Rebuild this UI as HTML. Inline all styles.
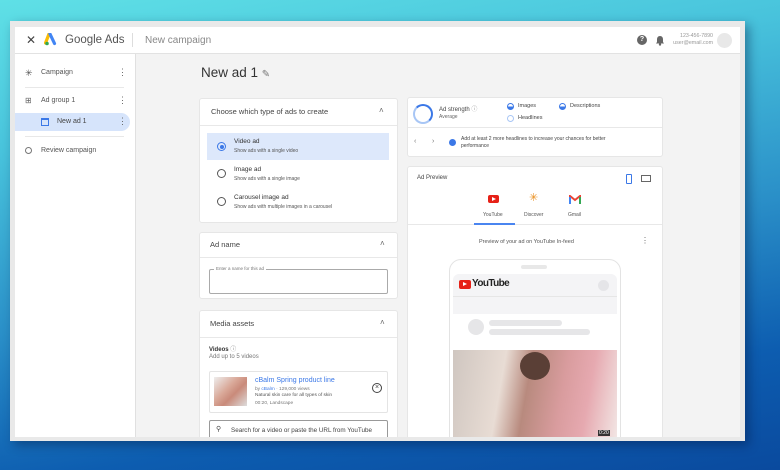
<!DOCTYPE html>
<html><head><meta charset="utf-8"><style>
*{margin:0;padding:0;box-sizing:border-box}
body{width:780px;height:470px;overflow:hidden;position:relative;font-family:"Liberation Sans",Arial,sans-serif;color:#3c4043;
background:linear-gradient(170deg,#5fe0e6 0%,#48c3dc 25%,#2a8fc8 55%,#0d5db0 80%,#0a4a9e 100%)}
.a{position:absolute}
.frame{left:10px;top:21px;width:735px;height:420px;background:#e9e9e9;box-shadow:4px 4px 10px rgba(0,20,60,.4)}
.hdr{left:15px;top:27px;width:725px;height:27px;background:#fff;border-bottom:1px solid #e2e2e2}
.main{left:15px;top:54px;width:725px;height:383px;background:#f3f3f3}
.side{left:15px;top:54px;width:121px;height:383px;background:#fff;border-right:1px solid #e0e0e0}
.t{position:absolute;white-space:nowrap}
.card{position:absolute;background:#fff;border:1px solid #e6e6e6;border-radius:3px}
.sep{position:absolute;height:1px;background:#e8e8e8}
.radio{position:absolute;width:9px;height:9px;border:1.3px solid #555;border-radius:50%}
.clip{position:absolute;left:0;top:0;width:780px;height:437px;overflow:hidden}
</style></head><body>
<div class="a frame"></div>
<div class="a main"></div>
<div class="a hdr"></div>
<div class="a side"></div>
<!-- header -->
<div class="t" style="left:26px;top:33px;font-size:12px;color:#444">✕</div>
<svg class="a" style="left:44px;top:33px" width="15" height="13" viewBox="0 0 15 13"><path d="M5 1 L1.5 10" stroke="#fbbc04" stroke-width="3.2" stroke-linecap="round"/><path d="M6 1 L10.5 10.5" stroke="#4285f4" stroke-width="3.2" stroke-linecap="round"/><circle cx="3" cy="10.5" r="1.8" fill="#34a853"/></svg>
<div class="t" style="left:65px;top:34px;font-size:11.5px;color:#555">Google Ads</div>
<div class="a" style="left:132px;top:33px;width:1px;height:14px;background:#ddd"></div>
<div class="t" style="left:145px;top:35px;font-size:10px;color:#888">New campaign</div>
<div class="a" style="left:637px;top:35px;width:10px;height:10px;border-radius:50%;background:#666;color:#fff;font-size:7px;text-align:center;line-height:10px;font-weight:bold">?</div>
<svg class="a" style="left:655px;top:35px" width="10" height="11" viewBox="0 0 10 11"><path d="M5 1C3 1 2 2.5 2 4.5V7L1 8.5H9L8 7V4.5C8 2.5 7 1 5 1Z" fill="#666"/><circle cx="5" cy="9.5" r="1.2" fill="#666"/></svg>
<div class="t" style="left:666px;top:33px;width:47px;font-size:5.3px;color:#999;text-align:right;line-height:7px">123-456-7890<br>user@email.com</div>
<div class="a" style="left:717px;top:33px;width:15px;height:15px;border-radius:50%;background:#e8e8e8"></div>
<!-- sidebar -->
<div class="t" style="left:25px;top:68px;font-size:9px;color:#555">✳</div>
<div class="t" style="left:41px;top:69px;font-size:7px;color:#555">Campaign</div>
<div class="t" style="left:118px;top:67px;font-size:9px;color:#666">⋮</div>
<div class="sep" style="left:25px;top:87px;width:99px"></div>
<div class="t" style="left:25px;top:96px;font-size:8px;color:#666">⊞</div>
<div class="t" style="left:41px;top:97px;font-size:7px;color:#555">Ad group 1</div>
<div class="t" style="left:118px;top:95px;font-size:9px;color:#666">⋮</div>
<div class="a" style="left:15px;top:113px;width:115px;height:18px;background:#d6e4fb;border-radius:0 9px 9px 0"></div>
<div class="a" style="left:41px;top:118px;width:8px;height:8px;border:1.3px solid #3b78e7;border-top-width:2.5px"></div>
<div class="t" style="left:57px;top:118px;font-size:7px;color:#444">New ad 1</div>
<div class="t" style="left:118px;top:116px;font-size:9px;color:#666">⋮</div>
<div class="sep" style="left:25px;top:136px;width:99px"></div>
<div class="a" style="left:25px;top:147px;width:7px;height:7px;border:1px solid #777;border-radius:50%"></div>
<div class="t" style="left:41px;top:147px;font-size:7px;color:#555">Review campaign</div>
<!-- title -->
<div class="t" style="left:201px;top:65px;font-size:13.5px;color:#333">New ad 1 <span style="font-size:10px;color:#777">✎</span></div>
<div class="clip">
<!-- card 1 -->
<div class="card" style="left:199px;top:98px;width:199px;height:125px"></div>
<div class="t" style="left:211px;top:107px;font-size:7.5px;color:#444">Choose which type of ads to create</div>
<div class="t" style="left:379px;top:106px;font-size:8px;color:#666">˄</div>
<div class="sep" style="left:200px;top:125px;width:197px"></div>
<div class="a" style="left:207px;top:133px;width:182px;height:27px;background:#dde8fb"></div>
<div class="radio" style="left:217px;top:142px;border-color:#3b78e7"></div><div class="a" style="left:220px;top:145px;width:4px;height:4px;border-radius:50%;background:#3b78e7"></div>
<div class="t" style="left:234px;top:138px;font-size:6.5px;color:#333">Video ad</div>
<div class="t" style="left:234px;top:148px;font-size:5px;color:#555">Show ads with a single video</div>
<div class="radio" style="left:217px;top:169px"></div>
<div class="t" style="left:234px;top:166px;font-size:6.5px;color:#333">Image ad</div>
<div class="t" style="left:234px;top:176px;font-size:5px;color:#555">Show ads with a single image</div>
<div class="radio" style="left:217px;top:197px"></div>
<div class="t" style="left:234px;top:194px;font-size:6.5px;color:#333">Carousel image ad</div>
<div class="t" style="left:234px;top:204px;font-size:5px;color:#555">Show ads with multiple images in a carousel</div>
<!-- card 2 -->
<div class="card" style="left:199px;top:232px;width:199px;height:67px"></div>
<div class="t" style="left:210px;top:240px;font-size:7.5px;color:#444">Ad name</div>
<div class="t" style="left:380px;top:239px;font-size:8px;color:#666">˄</div>
<div class="sep" style="left:200px;top:257px;width:197px"></div>
<div class="a" style="left:209px;top:269px;width:179px;height:25px;border:1px solid #aaa;border-radius:2px"></div>
<div class="t" style="left:214px;top:266px;font-size:4.5px;color:#777;background:#fff;padding:0 2px">Enter a name for this ad</div>
<!-- card 3 -->
<div class="card" style="left:199px;top:310px;width:199px;height:130px"></div>
<div class="t" style="left:210px;top:319px;font-size:7.5px;color:#444">Media assets</div>
<div class="t" style="left:380px;top:318px;font-size:8px;color:#666">˄</div>
<div class="sep" style="left:200px;top:337px;width:197px"></div>
<div class="t" style="left:209px;top:344px;font-size:6px;color:#333;font-weight:bold">Videos <span style="font-weight:normal;color:#888">ⓘ</span></div>
<div class="t" style="left:209px;top:354px;font-size:6px;color:#777">Add up to 5 videos</div>
<div class="a" style="left:209px;top:371px;width:179px;height:42px;border:1px solid #e4e4e4;border-radius:2px"></div>
<div class="a" style="left:214px;top:377px;width:33px;height:29px;background:linear-gradient(135deg,#eee 0%,#d9a898 40%,#c98a7a 60%,#ddd 100%)"></div>
<div class="t" style="left:255px;top:377px;font-size:7px;color:#3b78e7">cBalm Spring product line</div>
<div class="t" style="left:255px;top:387px;font-size:4.8px;color:#777">by <span style="color:#3b78e7">cBalm</span> · 129,000 views</div>
<div class="t" style="left:255px;top:393px;font-size:4.8px;color:#555">Natural skin care for all types of skin</div>
<div class="t" style="left:255px;top:401px;font-size:4.8px;color:#777">00:20, Landscape</div>
<div class="a" style="left:372px;top:383px;width:10px;height:10px;border:1.2px solid #444;border-radius:50%;font-size:7px;line-height:7px;text-align:center;color:#444">×</div>
<div class="a" style="left:209px;top:420px;width:179px;height:20px;border:1px solid #999;border-radius:2px"></div>
<div class="t" style="left:216px;top:425px;font-size:7px;color:#444">⚲</div>
<div class="t" style="left:231px;top:427px;font-size:6.3px;color:#444">Search for a video or paste the URL from YouTube</div>
<!-- strength card -->
<div class="card" style="left:407px;top:97px;width:256px;height:60px"></div>
<div class="a" style="left:413px;top:104px;width:20px;height:20px;border-radius:50%;border:2px solid #a8c6f5;border-top-color:#3b78e7;border-right-color:#3b78e7"></div>
<div class="t" style="left:439px;top:104px;font-size:6px;color:#444">Ad strength <span style="color:#999">ⓘ</span></div>
<div class="t" style="left:439px;top:114px;font-size:5px;color:#666">Average</div>
<div class="a" style="left:507px;top:103px;width:7px;height:7px;border-radius:50%;border:1px solid #3b78e7;background:linear-gradient(#fff 50%,#3b78e7 50%)"></div>
<div class="t" style="left:518px;top:103px;font-size:5.5px;color:#444">Images</div>
<div class="a" style="left:559px;top:103px;width:7px;height:7px;border-radius:50%;border:1px solid #3b78e7;background:linear-gradient(#fff 50%,#3b78e7 50%)"></div>
<div class="t" style="left:570px;top:103px;font-size:5.5px;color:#444">Descriptions</div>
<div class="a" style="left:507px;top:115px;width:7px;height:7px;border-radius:50%;border:1px solid #a8c6f5"></div>
<div class="t" style="left:518px;top:115px;font-size:5.5px;color:#444">Headlines</div>
<div class="sep" style="left:408px;top:127px;width:254px"></div>
<div class="t" style="left:414px;top:138px;font-size:7px;color:#777">‹</div>
<div class="t" style="left:432px;top:138px;font-size:7px;color:#777">›</div>
<div class="a" style="left:449px;top:139px;width:7px;height:7px;border-radius:50%;background:#3b78e7"></div>
<div class="t" style="left:461px;top:136px;font-size:5px;color:#444;line-height:7px">Add at least 2 more headlines to increase your chances for better<br>performance</div>
<!-- preview card -->
<div class="card" style="left:407px;top:166px;width:256px;height:274px"></div>
<div class="t" style="left:417px;top:175px;font-size:6px;color:#444">Ad Preview</div>
<div class="a" style="left:626px;top:174px;width:6px;height:10px;border:1.3px solid #3b78e7;border-radius:1px"></div>
<div class="a" style="left:641px;top:175px;width:10px;height:7px;border:1.2px solid #666"></div>
<div class="a" style="left:488px;top:195px;width:11px;height:8px;border-radius:2px;background:#e62117"></div>
<div class="a" style="left:492px;top:197px;width:0;height:0;border-left:4px solid #fff;border-top:2px solid transparent;border-bottom:2px solid transparent"></div>
<div class="t" style="left:529px;top:192px;font-size:11px;color:#ea8f1f;line-height:12px">✳</div>
<svg class="a" style="left:569px;top:195px" width="12" height="9" viewBox="0 0 12 9"><path d="M1 9V1L6 5L11 1V9" fill="none" stroke="#ea4335" stroke-width="2"/><path d="M1 9V2" stroke="#4285f4" stroke-width="2"/><path d="M11 9V2" stroke="#34a853" stroke-width="2"/></svg>
<div class="t" style="left:483px;top:212px;font-size:5px;color:#555">YouTube</div>
<div class="t" style="left:524px;top:212px;font-size:5px;color:#555">Discover</div>
<div class="t" style="left:568px;top:212px;font-size:5px;color:#555">Gmail</div>
<div class="sep" style="left:408px;top:224px;width:254px"></div>
<div class="a" style="left:474px;top:223px;width:41px;height:2px;background:#4a85f0"></div>
<div class="t" style="left:479px;top:239px;font-size:5.5px;color:#555">Preview of your ad on YouTube In-feed</div>
<div class="t" style="left:641px;top:236px;font-size:8px;color:#666">⋮</div>
<div class="a" style="left:449px;top:259px;width:172px;height:190px;border:1.5px solid #e3e3e3;border-radius:12px"></div>
<div class="a" style="left:521px;top:265px;width:26px;height:4px;border-radius:2px;background:#e8e8e8"></div>
<div class="a" style="left:453px;top:274px;width:164px;height:166px;background:#f4f4f6;border-radius:6px 6px 0 0"></div>
<div class="a" style="left:453px;top:296px;width:164px;height:1px;background:#e6e6e6"></div>
<div class="a" style="left:459px;top:280px;width:12px;height:9px;border-radius:2px;background:#e62117"></div>
<div class="a" style="left:463px;top:282px;width:0;height:0;border-left:4px solid #fff;border-top:2.5px solid transparent;border-bottom:2.5px solid transparent"></div>
<div class="t" style="left:472px;top:278px;font-size:10px;color:#222;font-weight:bold;letter-spacing:-.6px">YouTube</div>
<div class="a" style="left:598px;top:280px;width:11px;height:11px;border-radius:50%;background:#e5e5e8"></div>
<div class="a" style="left:453px;top:314px;width:164px;height:37px;background:#fff"></div>
<div class="a" style="left:468px;top:319px;width:16px;height:16px;border-radius:50%;background:#e6e6e8"></div>
<div class="a" style="left:489px;top:320px;width:73px;height:6px;border-radius:3px;background:#e6e6e8"></div>
<div class="a" style="left:489px;top:329px;width:101px;height:6px;border-radius:3px;background:#e6e6e8"></div>
<div class="a" style="left:453px;top:350px;width:164px;height:88px;background:linear-gradient(100deg,#cfc6c0 0%,#e8dcd4 30%,#b88a7e 45%,#d99c9e 65%,#e6a9b0 80%,#f2e6e4 100%)"></div>
<div class="a" style="left:520px;top:352px;width:30px;height:28px;border-radius:50%;background:#5a3f36"></div>
<div class="t" style="left:598px;top:430px;font-size:5px;color:#fff;background:#333;padding:0 1px">0:20</div>
</div>
<div class="a" style="left:10px;top:437px;width:735px;height:4px;background:#e9e9e9"></div>
</body></html>
